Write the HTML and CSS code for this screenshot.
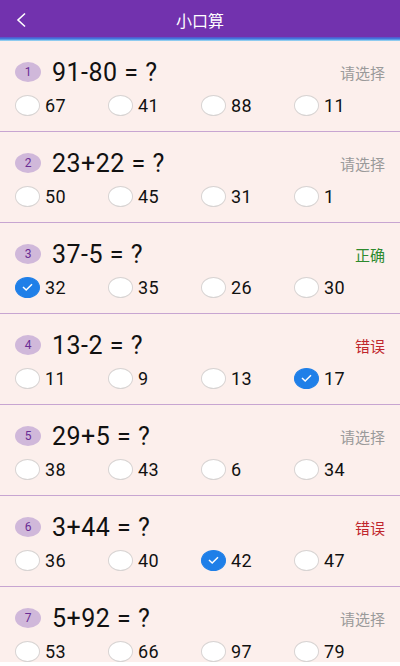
FILE: index.html
```html
<!DOCTYPE html>
<html lang="zh">
<head>
<meta charset="utf-8">
<link rel="stylesheet" href="styles.css">
</head>
<body>
<div class="header">
  <svg class="back" width="12" height="16" viewBox="0 0 12 16"><path d="M10 1.5 L3 8 L10 14.5" fill="none" stroke="#fff" stroke-width="1.6"/></svg>
  <div class="title">小口算</div>
</div>
<div class="strip"></div>
<div class="list">
  <div class="card">
    <div class="qrow"><span class="badge">1</span><span class="q">91-80 = ?</span><span class="status pending">请选择</span></div>
    <div class="opts">
      <div class="opt"><span class="radio"></span><span class="val">67</span></div>
      <div class="opt"><span class="radio"></span><span class="val">41</span></div>
      <div class="opt"><span class="radio"></span><span class="val">88</span></div>
      <div class="opt"><span class="radio"></span><span class="val">11</span></div>
    </div>
  </div>
  <div class="card">
    <div class="qrow"><span class="badge">2</span><span class="q">23+22 = ?</span><span class="status pending">请选择</span></div>
    <div class="opts">
      <div class="opt"><span class="radio"></span><span class="val">50</span></div>
      <div class="opt"><span class="radio"></span><span class="val">45</span></div>
      <div class="opt"><span class="radio"></span><span class="val">31</span></div>
      <div class="opt"><span class="radio"></span><span class="val">1</span></div>
    </div>
  </div>
  <div class="card">
    <div class="qrow"><span class="badge">3</span><span class="q">37-5 = ?</span><span class="status right">正确</span></div>
    <div class="opts">
      <div class="opt"><span class="radio checked"><svg width="13" height="10" viewBox="0 0 13 10"><path d="M2 5 L5.2 8 L11 2.2" fill="none" stroke="#fff" stroke-width="1.5"/></svg></span><span class="val">32</span></div>
      <div class="opt"><span class="radio"></span><span class="val">35</span></div>
      <div class="opt"><span class="radio"></span><span class="val">26</span></div>
      <div class="opt"><span class="radio"></span><span class="val">30</span></div>
    </div>
  </div>
  <div class="card">
    <div class="qrow"><span class="badge">4</span><span class="q">13-2 = ?</span><span class="status wrong">错误</span></div>
    <div class="opts">
      <div class="opt"><span class="radio"></span><span class="val">11</span></div>
      <div class="opt"><span class="radio"></span><span class="val">9</span></div>
      <div class="opt"><span class="radio"></span><span class="val">13</span></div>
      <div class="opt"><span class="radio checked"><svg width="13" height="10" viewBox="0 0 13 10"><path d="M2 5 L5.2 8 L11 2.2" fill="none" stroke="#fff" stroke-width="1.5"/></svg></span><span class="val">17</span></div>
    </div>
  </div>
  <div class="card">
    <div class="qrow"><span class="badge">5</span><span class="q">29+5 = ?</span><span class="status pending">请选择</span></div>
    <div class="opts">
      <div class="opt"><span class="radio"></span><span class="val">38</span></div>
      <div class="opt"><span class="radio"></span><span class="val">43</span></div>
      <div class="opt"><span class="radio"></span><span class="val">6</span></div>
      <div class="opt"><span class="radio"></span><span class="val">34</span></div>
    </div>
  </div>
  <div class="card">
    <div class="qrow"><span class="badge">6</span><span class="q">3+44 = ?</span><span class="status wrong">错误</span></div>
    <div class="opts">
      <div class="opt"><span class="radio"></span><span class="val">36</span></div>
      <div class="opt"><span class="radio"></span><span class="val">40</span></div>
      <div class="opt"><span class="radio checked"><svg width="13" height="10" viewBox="0 0 13 10"><path d="M2 5 L5.2 8 L11 2.2" fill="none" stroke="#fff" stroke-width="1.5"/></svg></span><span class="val">42</span></div>
      <div class="opt"><span class="radio"></span><span class="val">47</span></div>
    </div>
  </div>
  <div class="card">
    <div class="qrow"><span class="badge">7</span><span class="q">5+92 = ?</span><span class="status pending">请选择</span></div>
    <div class="opts">
      <div class="opt"><span class="radio"></span><span class="val">53</span></div>
      <div class="opt"><span class="radio"></span><span class="val">66</span></div>
      <div class="opt"><span class="radio"></span><span class="val">97</span></div>
      <div class="opt"><span class="radio"></span><span class="val">79</span></div>
    </div>
  </div>
</div>
</body>
</html>
```
FILE: styles.css
```css
html, body {
  margin: 0;
  padding: 0;
  background: #ffffff;
  font-family: Roboto, "Noto Sans CJK SC", sans-serif;
}
body {
  width: 400px;
  height: 666px;
  overflow: hidden;
}
.header {
  height: 37px;
  background: #7232ae;
  position: relative;
  display: flex;
  align-items: center;
  justify-content: center;
}
.back {
  position: absolute;
  left: 15px;
  top: 12px;
}
.title {
  color: #ffffff;
  font-size: 16px;
  font-family: "Noto Sans CJK SC", sans-serif;
  margin-top: 2px;
}
.strip {
  height: 4px;
  background: linear-gradient(to bottom, #5a4fc8 0%, #3f7fe0 50%, #a8e4f4 100%);
}
.list {
  height: 621px;
  background: #fcefec;
  overflow: hidden;
}
.card {
  padding: 18px 14px 15px 15px;
  border-bottom: 1px solid #c7a5d1;
}
.qrow {
  height: 26px;
  display: flex;
  align-items: center;
}
.badge {
  width: 26px;
  height: 20px;
  border-radius: 50%;
  background: #d0b8da;
  color: #6a2c94;
  font-size: 12px;
  display: flex;
  align-items: center;
  justify-content: center;
  flex: none;
}
.q {
  margin-left: 11px;
  font-size: 25px;
  letter-spacing: 0.5px;
  color: #111111;
  flex: 1;
}
.status {
  font-size: 15px;
  font-family: "Noto Sans CJK SC", sans-serif;
  margin-right: 1px;
}
.pending { color: #9a9a9a; }
.right { color: #2e8a2e; }
.wrong { color: #c0262c; }
.opts {
  margin-top: 9px;
  height: 22px;
  display: flex;
}
.opt {
  width: 93px;
  display: flex;
  align-items: center;
  flex: none;
}
.radio {
  width: 23px;
  height: 19px;
  border-radius: 50%;
  border: 1px solid #d8d4d3;
  background: #ffffff;
  display: flex;
  align-items: center;
  justify-content: center;
  flex: none;
}
.radio.checked {
  background: #1f7fe8;
  border-color: #1f7fe8;
}
.val {
  margin-left: 5px;
  font-size: 18px;
  letter-spacing: 0.3px;
  color: #111111;
}
```
